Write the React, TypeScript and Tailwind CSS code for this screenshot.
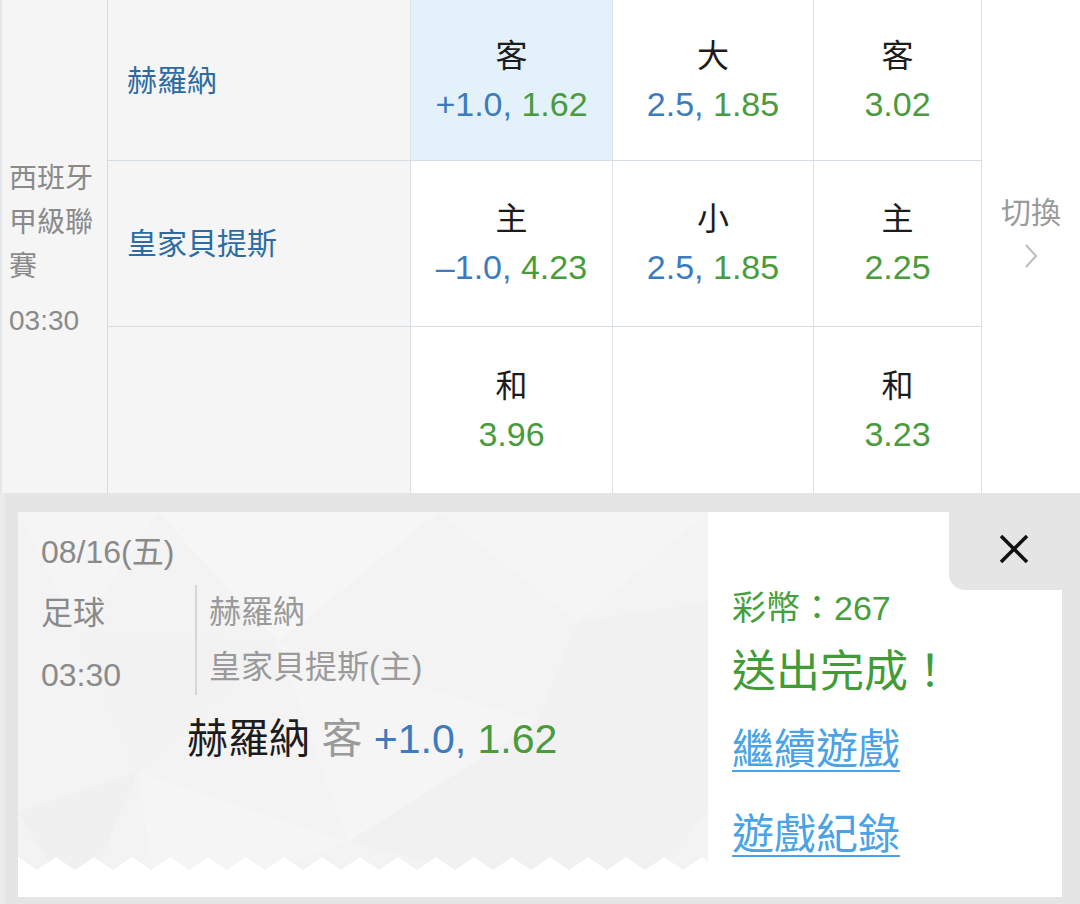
import React from "react";

const BLUE = "text-[#3c7bbd]";
const GREEN = "text-[#4a9b3e]";

function OddsCell({
  label,
  a,
  b,
  hl,
  last,
}: {
  label?: string;
  a?: string;
  b?: string;
  hl?: boolean;
  last?: boolean;
}) {
  return (
    <div
      className={
        "flex flex-col items-center justify-center pb-[1px] border-r border-r-[#dde2e6] " +
        (hl ? "bg-[#e3f1fb] " : "bg-white ") +
        (last ? "" : "border-b border-b-[#d5dde4]")
      }
    >
      {label && (
        <div className="text-[32px] leading-[48px] text-[#1c1c1c]">{label}</div>
      )}
      {b && (
        <div className="text-[34px] leading-[48px] whitespace-nowrap">
          {a && <span className={BLUE}>{a}, </span>}
          <span className={GREEN}>{b}</span>
        </div>
      )}
    </div>
  );
}

function TeamCell({ name, last }: { name?: string; last?: boolean }) {
  return (
    <div
      className={
        "flex items-center pl-[19px] bg-[#f5f5f5] border-r border-r-[#dde2e6] text-[30px] text-[#2c6ca3] " +
        (last ? "" : "border-b border-b-[#d5dde4]")
      }
    >
      {name}
    </div>
  );
}

function TicketBg() {
  const pts: string[] = ["0,0", "690,0", "690,350"];
  for (let x = 684; x >= 0; x -= 38) {
    if (x + 19 <= 690) pts.push(`${x + 19},358`);
    pts.push(`${x},345`);
  }
  pts.push("0,345");
  return (
    <svg
      className="absolute inset-0"
      width="690"
      height="385"
      viewBox="0 0 690 385"
    >
      <defs>
        <clipPath id="zz">
          <polygon points={pts.join(" ")} />
        </clipPath>
      </defs>
      <polygon points={pts.join(" ")} fill="#f3f3f3" />
      <g clipPath="url(#zz)">
        <polygon points="0,0 140,0 60,120" fill="#f5f5f5" />
        <polygon points="140,0 420,0 260,130" fill="#f6f6f6" />
        <polygon points="60,120 260,130 120,260" fill="#f2f2f2" />
        <polygon points="260,130 520,210 330,330" fill="#f5f5f5" />
        <polygon points="420,0 690,0 560,110" fill="#f5f5f5" />
        <polygon points="560,110 690,90 690,300 520,210" fill="#f1f1f1" />
        <polygon points="120,260 330,330 140,400" fill="#f5f5f5" />
        <polygon points="330,330 520,210 690,300 600,400" fill="#f1f1f1" />
        <polygon points="0,300 120,260 60,400" fill="#f0f0f0" />
      </g>
    </svg>
  );
}

export default function App() {
  return (
    <div className="w-[1080px] h-[904px] overflow-hidden bg-[#e5e5e5] font-['Liberation_Sans','Noto_Sans_CJK_TC',sans-serif]">
      <div className="grid grid-cols-[108px_303px_202px_201px_168px_98px] grid-rows-[161px_166px_166px] bg-white">
        <div className="row-span-3 bg-[#f5f5f5] border-l-2 border-l-[#e2e7eb] border-r border-r-[#dadada] flex flex-col justify-center pl-[7px] pt-[6px] text-[28px] text-[#8a8a8a] leading-[44px]">
          <div>西班牙</div>
          <div>甲級聯</div>
          <div>賽</div>
          <div className="mt-[10px]">03:30</div>
        </div>
        <TeamCell name="赫羅納" />
        <OddsCell label="客" a="+1.0" b="1.62" hl />
        <OddsCell label="大" a="2.5" b="1.85" />
        <OddsCell label="客" b="3.02" />
        <div className="row-span-3 bg-white flex flex-col items-center justify-center pb-[32px] text-[30px] text-[#9a9a9a]">
          <div className="leading-[40px]">切換</div>
          <svg width="14" height="26" viewBox="0 0 14 26" className="mt-[10px]">
            <polyline
              points="2,2 12,13 2,24"
              fill="none"
              stroke="#bdbdbd"
              strokeWidth="2"
            />
          </svg>
        </div>
        <TeamCell name="皇家貝提斯" />
        <OddsCell label="主" a="–1.0" b="4.23" />
        <OddsCell label="小" a="2.5" b="1.85" />
        <OddsCell label="主" b="2.25" />
        <TeamCell last />
        <OddsCell label="和" b="3.96" last />
        <OddsCell last />
        <OddsCell label="和" b="3.23" last />
      </div>

      <div className="h-[411px] pt-[19px] pl-[13px] pr-[18px] border-l-[5px] border-l-[#ebebeb]">
        <div className="relative flex h-[385px] bg-white">
          <div className="relative w-[690px] h-full">
            <TicketBg />
            <div className="relative pl-[23px] pt-[20px] text-[32px] text-[#8a8a8a]">
              <div className="leading-[40px]">08/16(五)</div>
              <div className="flex items-start mt-[10px]">
                <div className="w-[154px] leading-[62px]">
                  <div>足球</div>
                  <div>03:30</div>
                </div>
                <div className="mt-[3px] border-l-2 border-l-[#d6d6d6] pl-[12px] leading-[55px] text-[#9a9a9a]">
                  <div>赫羅納</div>
                  <div>皇家貝提斯(主)</div>
                </div>
              </div>
              <div className="ml-[146px] mt-[8px] leading-[50px] text-[41px] whitespace-nowrap">
                <span className="text-[#1c1c1c]">赫羅納</span>
                <span className="text-[#9a9a9a]"> 客 </span>
                <span className="text-[#3c7bbd]">+1.0, </span>
                <span className="text-[#4a9b3e]">1.62</span>
              </div>
            </div>
          </div>
          <div className="flex-1 pl-[24px] pt-[72px]">
            <div className="text-[34px] leading-[48px] text-[#43a03a] whitespace-nowrap">彩幣：267</div>
            <div className="mt-[8px] text-[44px] leading-[64px] text-[#3f9c37]">送出完成！</div>
            <div className="mt-[18px] text-[42px] leading-[56px] text-[#4aa3e6] underline decoration-2 underline-offset-[6px]">
              繼續遊戲
            </div>
            <div className="mt-[29px] text-[42px] leading-[56px] text-[#4aa3e6] underline decoration-2 underline-offset-[6px]">
              遊戲紀錄
            </div>
          </div>
          <div className="absolute top-0 right-[-18px] w-[131px] h-[78px] bg-[#e5e5e5] rounded-bl-[16px] flex items-center justify-center">
            <svg width="30" height="30" viewBox="0 0 30 30" className="-ml-[2px] -mt-[4px]">
              <line x1="2" y1="2" x2="28" y2="28" stroke="#111" strokeWidth="3.5" />
              <line x1="28" y1="2" x2="2" y2="28" stroke="#111" strokeWidth="3.5" />
            </svg>
          </div>
        </div>
      </div>
    </div>
  );
}
